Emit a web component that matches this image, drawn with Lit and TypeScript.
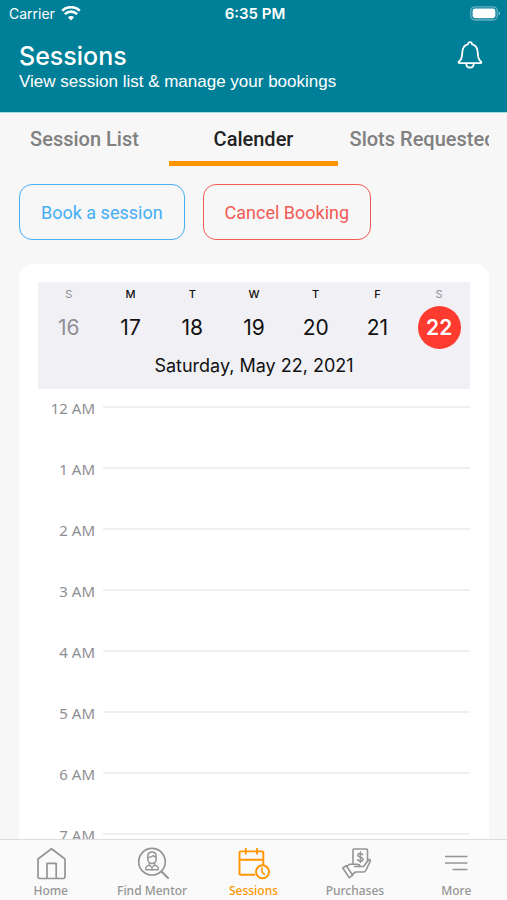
import { LitElement, html, css, svg } from "lit";
import { customElement, property, state } from "lit/decorators.js";
import { classMap } from "lit/directives/class-map.js";

const bellIcon = svg`<svg width="26" height="28" viewBox="0 0 26 28" fill="none" stroke="currentColor" stroke-width="1.800" stroke-linejoin="round" stroke-linecap="round">
  <path d="M11 3.200C11 1.900 11.900 1.200 13 1.200S15 1.900 15 3.200C19 4.300 20.500 7.600 20.700 11.500C20.900 16.500 21.800 19.200 24 20.600C24.700 21.100 24.400 22.200 23.500 22.200H2.500C1.600 22.200 1.300 21.100 2 20.600C4.200 19.200 5.100 16.500 5.300 11.500C5.500 7.600 7 4.300 11 3.200Z"/>
  <path d="M9.300 22.400C9.300 25.200 10.900 26.600 13 26.600S16.700 25.200 16.700 22.400"/>
</svg>`;

const wifiIcon = svg`<svg width="20" height="15" viewBox="0 0 20 15" fill="currentColor">
  <path d="M10 14.400L6.900 11.300A4.400 4.400 0 0 1 13.100 11.300Z"/>
  <path d="M3.900 8.100A8.700 8.700 0 0 1 16.100 8.100" fill="none" stroke="currentColor" stroke-width="2.600"/>
  <path d="M1.200 4.700A12.600 12.600 0 0 1 18.800 4.700" fill="none" stroke="currentColor" stroke-width="2.600"/>
</svg>`;

const batteryIcon = svg`<svg width="31" height="15" viewBox="0 0 31 15">
  <rect x="0.800" y="0.800" width="26.400" height="13.200" rx="4" fill="none" stroke="#fff" stroke-opacity="0.400" stroke-width="1.300"/>
  <rect x="2.600" y="2.600" width="22.800" height="9.600" rx="2.400" fill="#fff"/>
  <path d="M28.600 5.200C30.600 6 30.600 8.800 28.600 9.600Z" fill="#fff" fill-opacity="0.500"/>
</svg>`;

const homeIcon = svg`<svg width="34" height="34" viewBox="0 0 34 34" fill="none" stroke="currentColor" stroke-width="1.700" stroke-linejoin="round">
  <path d="M17.500 2.800L31 13V31Q31 32.500 29.500 32.500H5.500Q4 32.500 4 31V13Z"/>
  <path d="M13 32.500V17.300H22.200V32.500"/>
</svg>`;

const mentorIcon = svg`<svg width="34" height="34" viewBox="0 0 34 34" fill="none" stroke="currentColor" stroke-width="1.700" stroke-linejoin="round" stroke-linecap="round">
  <circle cx="17" cy="15.700" r="13.300"/>
  <path d="M26.500 25.500L33 32" stroke-width="2"/>
  <path d="M12.800 10.500C12.800 7.500 14.500 6 17 6S21.200 7.500 21.200 10.500V13C21.200 15.500 19.500 17.500 17 17.500S12.800 15.500 12.800 13Z" stroke-width="1.500"/>
  <path d="M13 11.300C15.500 11.300 17.500 10.700 18.500 9.500C19 10.500 20 11 21 11" stroke-width="1.300"/>
  <path d="M14.500 17V19L12.300 19.800C11.200 20.300 10.800 21 10.800 22V23.700H23.200V22C23.200 21 22.800 20.300 21.700 19.800L19.500 19V17M14.500 19.200L17 21.200L19.500 19.200M17 21.200V23.500" stroke-width="1.400"/>
</svg>`;

const sessionsIcon = svg`<svg width="34" height="34" viewBox="0 0 34 34" fill="none" stroke="currentColor" stroke-width="1.900" stroke-linejoin="round" stroke-linecap="round">
  <path d="M18.300 28.700H4.800Q3.500 28.700 3.500 27.400V6.700Q3.500 5.400 4.800 5.400H26Q27.300 5.400 27.300 6.700V18.300M3.500 13.700H27.300"/>
  <path d="M9.800 2.800V7.800M21 2.800V7.800"/>
  <circle cx="26.500" cy="25.800" r="6.500"/>
  <path d="M26 22V26L28.500 28.500" stroke-width="1.600"/>
</svg>`;

const purchasesIcon = svg`<svg width="34" height="34" viewBox="0 0 34 34" fill="none" stroke="currentColor" stroke-width="1.600" stroke-linejoin="round" stroke-linecap="round">
  <path d="M15 18V4Q15 3 16 3H28.500Q29.500 3 29.500 4V15.500"/>
  <path d="M24.800 8.700C24.200 7.700 23.300 7.400 22.300 7.400C20.800 7.400 19.800 8.100 19.800 9.300C19.800 11.800 25 10.500 25 13.200C25 14.500 23.800 15.100 22.400 15.100C21.100 15.100 20.100 14.600 19.500 13.600M22.400 5.900V16.500" stroke-width="1.500"/>
  <path d="M4.800 22L8.300 19.700L14.700 29.300L11.300 31.700Z"/>
  <path d="M9 20.500L11.500 18.200H19C20.500 18.200 22 19.200 22 20.500H16.500M22 20.500H25.500L30.500 14C31.500 12.700 33 13.800 32.200 15.300L27.800 24.500C27.300 25.500 26.500 26 25.500 26H17.500L14.200 28.500"/>
</svg>`;

const moreIcon = svg`<svg width="34" height="34" viewBox="0 0 34 34" fill="none" stroke="currentColor" stroke-width="1.500">
  <path d="M6 10.500H28.500M6 17H28.500M13.500 23.500H28.500"/>
</svg>`;

const sections = [
  { label: "Home", icon: homeIcon },
  { label: "Find Mentor", icon: mentorIcon },
  { label: "Sessions", icon: sessionsIcon },
  { label: "Purchases", icon: purchasesIcon },
  { label: "More", icon: moreIcon },
];

const days = [
  { name: "S", date: 16, weekend: true },
  { name: "M", date: 17, weekend: false },
  { name: "T", date: 18, weekend: false },
  { name: "W", date: 19, weekend: false },
  { name: "T", date: 20, weekend: false },
  { name: "F", date: 21, weekend: false },
  { name: "S", date: 22, weekend: true },
];

const fullNames = ["Sunday", "Monday", "Tuesday", "Wednesday", "Thursday", "Friday", "Saturday"];

const hours = ["12 AM", "1 AM", "2 AM", "3 AM", "4 AM", "5 AM", "6 AM", "7 AM"];

@customElement("week-calendar")
class WeekCalendar extends LitElement {
  @state() selected = 6;

  static styles = css`
    :host {
      display: block;
      padding: 18px 19px;
      background: #fff;
      border-radius: 14px;
      font-family: Inter, "Liberation Sans", sans-serif;
    }
    .week {
      background: #f1f0f5;
      height: 107px;
      color: #111;
    }
    .days {
      display: grid;
      grid-template-columns: repeat(7, 1fr);
    }
    .day {
      display: flex;
      flex-direction: column;
      align-items: center;
      padding: 4px 0 0;
      border: 0;
      background: none;
      color: inherit;
      font: inherit;
    }
    .name {
      font-size: 11px;
      line-height: 16px;
      font-weight: 500;
    }
    .date {
      width: 43px;
      line-height: 43px;
      margin-top: 4px;
      border-radius: 50%;
      font-size: 21px;
    }
    .weekend {
      color: #8e8e93;
    }
    .weekend .name {
      font-weight: 400;
    }
    .selected .date {
      background: #ff3b30;
      color: #fff;
      font-weight: 600;
    }
    .full {
      margin: 5px 0 0;
      text-align: center;
      font-size: 18px;
      line-height: 24px;
    }
    .hours {
      list-style: none;
      margin: 0;
      padding: 8px 0 0;
    }
    .hour {
      display: flex;
      align-items: flex-start;
      gap: 8px;
      height: 61px;
      color: #8e8e93;
      font-family: "Noto Sans", sans-serif;
      font-size: 15px;
      line-height: 22px;
    }
    .time {
      width: 57px;
      text-align: right;
    }
    .line {
      flex: 1;
      margin-top: 9px;
      border-top: 2px solid #f0f0f1;
    }
  `;

  render() {
    return html`
      <div class="week">
        <div class="days">
          ${days.map(
            (d, i) => html`<button
              class=${classMap({ day: true, weekend: d.weekend, selected: i === this.selected })}
              @click=${() => (this.selected = i)}
            >
              <span class="name">${d.name}</span>
              <span class="date">${d.date}</span>
            </button>`
          )}
        </div>
        <p class="full">${fullNames[this.selected]}, May ${days[this.selected].date}, 2021</p>
      </div>
      <ul class="hours">
        ${hours.map((h) => html`<li class="hour"><span class="time">${h}</span><span class="line"></span></li>`)}
      </ul>
    `;
  }
}

@customElement("section-bar")
class SectionBar extends LitElement {
  @property() current = "";

  static styles = css`
    :host {
      display: block;
      background: #fafafa;
      border-top: 1px solid #dcdcdc;
    }
    .bar {
      display: grid;
      grid-template-columns: repeat(5, 1fr);
      height: 60px;
    }
    .item {
      display: flex;
      flex-direction: column;
      align-items: center;
      padding-top: 6px;
      color: #959595;
      font-family: "Noto Sans", sans-serif;
      font-weight: 500;
      font-size: 12px;
      line-height: 20px;
      text-decoration: none;
      white-space: nowrap;
    }
    .label {
      margin-top: 1px;
    }
    .current {
      color: #ff9500;
    }
  `;

  render() {
    return html`<nav class="bar">
      ${sections.map(
        (s) => html`<a href="#" class=${classMap({ item: true, current: s.label === this.current })}
          >${s.icon}<span class="label">${s.label}</span></a
        >`
      )}
    </nav>`;
  }
}

@customElement("app-root")
class AppRoot extends LitElement {
  @state() tab = "Calender";

  static styles = css`
    :host {
      display: flex;
      flex-direction: column;
      height: 100vh;
      background: #f7f7f7;
      font-family: Inter, "Liberation Sans", sans-serif;
    }
    .header {
      background: #007f98;
      color: #fff;
      border-bottom: 1px solid #a5dfe6;
    }
    .status {
      display: grid;
      grid-template-columns: 1fr auto 1fr;
      align-items: center;
      height: 26px;
      padding: 0 6px 0 9px;
      font-size: 14px;
    }
    .carrier {
      display: flex;
      align-items: center;
      gap: 6px;
    }
    .clock {
      font-size: 15px;
      font-weight: 600;
    }
    .battery {
      display: flex;
      justify-content: flex-end;
    }
    .heading {
      display: flex;
      justify-content: space-between;
      align-items: flex-start;
      height: 86px;
      box-sizing: border-box;
      padding: 15px 24px 0 19px;
    }
    .title {
      margin: 0;
      font-size: 25px;
      line-height: 30px;
      font-weight: 500;
    }
    .subtitle {
      margin: 0;
      font-family: "Liberation Sans", sans-serif;
      font-size: 17px;
      line-height: 22px;
    }
    .bell {
      padding: 0;
      border: 0;
      background: none;
      color: #fff;
    }
    .tabs {
      display: grid;
      grid-template-columns: repeat(3, minmax(0, 1fr));
      clip-path: inset(0 18px);
    }
    .tab {
      display: flex;
      justify-content: center;
      height: 53px;
      padding: 0;
      border: 0;
      border-bottom: 5px solid transparent;
      background: none;
      color: #808080;
      font-family: Roboto, sans-serif;
      font-size: 20px;
      line-height: 53px;
      font-weight: 500;
      white-space: nowrap;
    }
    .active {
      color: #222;
      border-color: #ff9500;
    }
    .content {
      flex: 1;
      min-height: 0;
      overflow: hidden;
      padding: 18px 18px 0 19px;
    }
    .actions {
      display: flex;
      gap: 18px;
      margin-bottom: 24px;
    }
    .action {
      height: 56px;
      padding: 0 21px;
      border: 1px solid;
      border-radius: 13px;
      background: none;
      font-family: Roboto, sans-serif;
      font-size: 18px;
      white-space: nowrap;
    }
    .book {
      color: #45aef5;
    }
    .cancel {
      color: #f25a55;
    }
  `;

  render() {
    return html`
      <header class="header">
        <div class="status">
          <span class="carrier">Carrier ${wifiIcon}</span>
          <span class="clock">6:35 PM</span>
          <span class="battery">${batteryIcon}</span>
        </div>
        <div class="heading">
          <div>
            <h1 class="title">Sessions</h1>
            <p class="subtitle">View session list &amp; manage your bookings</p>
          </div>
          <button class="bell" aria-label="Notifications">${bellIcon}</button>
        </div>
      </header>
      <nav class="tabs">
        ${["Session List", "Calender", "Slots Requested"].map(
          (t) => html`<button class=${classMap({ tab: true, active: t === this.tab })} @click=${() => (this.tab = t)}>${t}</button>`
        )}
      </nav>
      <main class="content">
        <div class="actions">
          <button class="action book">Book a session</button>
          <button class="action cancel">Cancel Booking</button>
        </div>
        <week-calendar></week-calendar>
      </main>
      <section-bar current="Sessions"></section-bar>
    `;
  }
}
